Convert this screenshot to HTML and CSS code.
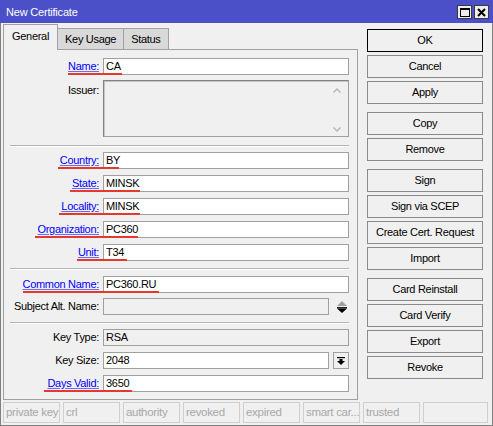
FILE: index.html
```html
<!DOCTYPE html>
<html lang="en">
<head>
    <meta charset="UTF-8">
    <meta name="viewport" content="width=device-width, initial-scale=1.0">
    <title>New Certificate</title>
    <link rel="stylesheet" href="styles.css">
</head>
<body>
    <div class="window">
        <div class="title-bar">
            <span class="title">New Certificate</span>
            <div class="win-buttons">
                <span class="win-btn">
                    <svg width="10" height="9" viewBox="0 0 10 9"><rect x="0.5" y="0.5" width="9" height="8" fill="none" stroke="#000"/><rect x="0" y="0" width="10" height="2" fill="#000"/></svg>
                </span>
                <span class="win-btn">
                    <svg width="9" height="9" viewBox="0 0 9 9"><path d="M1 1 L8 8 M8 1 L1 8" stroke="#000" stroke-width="2"/></svg>
                </span>
            </div>
        </div>

        <div class="window-body">
            <div class="main">
                <div class="tab-area">
                    <div class="tabs">
                        <div class="tab active">General</div>
                        <div class="tab">Key Usage</div>
                        <div class="tab">Status</div>
                    </div>

                    <div class="panel">
                        <!-- name / issuer -->
                        <div class="group g-top">
                            <div class="row">
                                <label class="lbl link">Name:</label>
                                <div class="field">CA</div>
                                <span class="mark m-name"></span>
                            </div>
                            <div class="row">
                                <label class="lbl lbl-top">Issuer:</label>
                                <div class="field disabled textarea">
                                    <div class="scroll">
                                        <svg width="8" height="5" viewBox="0 0 8 5"><path d="M0.5 4.5 L4 1 L7.5 4.5" fill="none" stroke="#b4b4b4" stroke-width="1.4"/></svg>
                                        <svg width="8" height="5" viewBox="0 0 8 5"><path d="M0.5 0.5 L4 4 L7.5 0.5" fill="none" stroke="#b4b4b4" stroke-width="1.4"/></svg>
                                    </div>
                                </div>
                            </div>
                        </div>

                        <div class="sep s1"></div>

                        <!-- subject -->
                        <div class="group">
                            <div class="row">
                                <label class="lbl link">Country:</label>
                                <div class="field">BY</div>
                                <span class="mark m-country"></span>
                            </div>
                            <div class="row">
                                <label class="lbl link">State:</label>
                                <div class="field">MINSK</div>
                                <span class="mark m-state"></span>
                            </div>
                            <div class="row">
                                <label class="lbl link">Locality:</label>
                                <div class="field">MINSK</div>
                                <span class="mark m-locality"></span>
                            </div>
                            <div class="row">
                                <label class="lbl link">Organization:</label>
                                <div class="field">PC360</div>
                                <span class="mark m-org"></span>
                            </div>
                            <div class="row">
                                <label class="lbl link">Unit:</label>
                                <div class="field">T34</div>
                                <span class="mark m-unit"></span>
                            </div>
                        </div>

                        <div class="sep s2"></div>

                        <div class="group g-tight">
                            <div class="row">
                                <label class="lbl link">Common Name:</label>
                                <div class="field">PC360.RU</div>
                                <span class="mark m-common"></span>
                            </div>
                            <div class="row with-btn">
                                <label class="lbl">Subject Alt. Name:</label>
                                <div class="field disabled"></div>
                                <div class="spin">
                                    <svg width="10" height="12" viewBox="0 0 10 12"><polygon points="5,0 10,5 0,5" fill="#9aa39a"/><rect x="0" y="6" width="10" height="1.5" fill="#222"/><polygon points="0,7.5 10,7.5 5,12" fill="#000"/></svg>
                                </div>
                            </div>
                        </div>

                        <div class="sep s3"></div>

                        <!-- key -->
                        <div class="group">
                            <div class="row">
                                <label class="lbl">Key Type:</label>
                                <div class="field disabled">RSA</div>
                            </div>
                            <div class="row with-btn">
                                <label class="lbl">Key Size:</label>
                                <div class="field">2048</div>
                                <div class="drop">
                                    <svg width="8" height="8" viewBox="0 0 8 8"><rect x="0" y="0" width="8" height="1.2" fill="#000"/><rect x="2.5" y="2" width="3" height="2.5" fill="#000"/><polygon points="0,4 8,4 4,8" fill="#000"/></svg>
                                </div>
                            </div>
                            <div class="row">
                                <label class="lbl link">Days Valid:</label>
                                <div class="field">3650</div>
                                <span class="mark m-days"></span>
                            </div>
                        </div>
                    </div>
                </div>

                <div class="actions">
                    <div class="btn-group">
                        <button class="btn default">OK</button>
                        <button class="btn">Cancel</button>
                        <button class="btn">Apply</button>
                    </div>
                    <div class="btn-group">
                        <button class="btn">Copy</button>
                        <button class="btn">Remove</button>
                    </div>
                    <div class="btn-group">
                        <button class="btn">Sign</button>
                        <button class="btn">Sign via SCEP</button>
                        <button class="btn">Create Cert. Request</button>
                        <button class="btn">Import</button>
                    </div>
                    <div class="btn-group">
                        <button class="btn">Card Reinstall</button>
                        <button class="btn">Card Verify</button>
                        <button class="btn">Export</button>
                        <button class="btn">Revoke</button>
                    </div>
                </div>
            </div>

            <div class="status-bar">
                <span class="cell">private key</span>
                <span class="cell">crl</span>
                <span class="cell">authority</span>
                <span class="cell">revoked</span>
                <span class="cell">expired</span>
                <span class="cell">smart car...</span>
                <span class="cell">trusted</span>
                <span class="cell last"></span>
            </div>
        </div>
    </div>
</body>
</html>
```

FILE: styles.css
```css
:root {
    --bg-color: #f0f0f0;
    --title-color: #4b50c8;
    --border-color: #a0a0a0;
    --link-color: #0000ff;
    --mark-color: #e5392f;
    --muted-color: #a8a8a8;
}

* {
    margin: 0;
    padding: 0;
    box-sizing: border-box;
}

body {
    font-family: "Liberation Sans", Arial, sans-serif;
    font-size: 11px;
    letter-spacing: -0.3px;
    color: #000;
    background: var(--bg-color);
}

.window {
    width: 493px;
    height: 426px;
    display: flex;
    flex-direction: column;
    background: var(--bg-color);
}

/* title bar */
.title-bar {
    height: 23px;
    flex-shrink: 0;
    background: var(--title-color);
    color: white;
    display: flex;
    justify-content: space-between;
    align-items: center;
    padding: 0 4px 0 6px;
}

.title {
    font-size: 11px;
    letter-spacing: -0.2px;
}

.win-buttons {
    display: flex;
    gap: 2px;
    padding-top: 1px;
}

.win-btn {
    width: 15px;
    height: 14px;
    background: #ededed;
    border: 1px solid #3a3a3a;
    display: flex;
    align-items: center;
    justify-content: center;
}

.window-body {
    flex: 1;
    border: 1px solid #808080;
    border-top: none;
    display: flex;
    flex-direction: column;
}

.main {
    display: flex;
    padding-left: 2px;
}

/* tabs */
.tab-area {
    width: 355px;
}

.tabs {
    height: 26px;
    display: flex;
    align-items: flex-end;
}

.tab {
    height: 21px;
    padding: 2px 7px 0;
    line-height: 17px;
    border: 1px solid var(--border-color);
    border-bottom: none;
    background: #d9d9d9;
    margin-left: -1px;
}

.tab.active {
    position: relative;
    z-index: 1;
    height: 26px;
    margin-left: 0;
    margin-bottom: -1px;
    padding: 3px 8px 0;
    background: var(--bg-color);
}

.panel {
    height: 351px;
    border: 1px solid var(--border-color);
    padding: 8px 8px 0 0;
}

.group {
    display: flex;
    flex-direction: column;
    gap: 6px;
}

.g-top,
.g-tight {
    gap: 5px;
}

.row {
    position: relative;
    display: grid;
    grid-template-columns: 95px 1fr;
    column-gap: 4px;
}

.row.with-btn {
    grid-template-columns: 95px 1fr 16px;
    column-gap: 4px 2px;
}

.lbl {
    text-align: right;
    line-height: 17px;
    white-space: nowrap;
}

.lbl-top {
    padding-top: 2px;
}

.link {
    color: var(--link-color);
    text-decoration: underline;
    text-decoration-color: #6b6bff;
}

.field {
    height: 17px;
    border: 1px solid var(--border-color);
    background: white;
    padding: 0 2px;
    line-height: 15px;
    white-space: nowrap;
}

.field.disabled {
    background: var(--bg-color);
}

.field.textarea {
    height: 57px;
    border-top-color: #828282;
    border-left-color: #828282;
    box-shadow: inset 1px 1px 0 #c4c4c4;
    display: flex;
    justify-content: flex-end;
}

.scroll {
    width: 14px;
    display: flex;
    flex-direction: column;
    justify-content: space-between;
    align-items: center;
    padding: 7px 0 4px;
    margin-right: 2px;
}

.spin {
    display: flex;
    justify-content: center;
    align-items: center;
    padding-left: 2px;
}

.drop {
    height: 17px;
    border: 1px solid var(--border-color);
    background: var(--bg-color);
    display: flex;
    justify-content: center;
    align-items: center;
}

/* separators */
.sep {
    margin-left: 6px;
    border-top: 1px solid #b4b4b4;
    border-bottom: 1px solid white;
}

.s1 { margin-top: 8px; margin-bottom: 5px; }
.s2 { margin-top: 7px; margin-bottom: 6px; }
.s3 { margin-top: 7px; margin-bottom: 5px; }

/* red annotation marks */
.mark {
    position: absolute;
    bottom: 0;
    height: 2px;
    background: var(--mark-color);
}

.m-name { left: 64px; width: 54px; }
.m-country { left: 54px; width: 61px; }
.m-state { left: 66px; width: 70px; }
.m-locality { left: 55px; width: 81px; }
.m-org { left: 31px; width: 103px; }
.m-unit { left: 73px; width: 50px; }
.m-common { left: 19px; width: 136px; }
.m-days { left: 40px; width: 88px; }

/* buttons column */
.actions {
    width: 116px;
    margin-left: 9px;
    padding-top: 6px;
    display: flex;
    flex-direction: column;
    gap: 8px;
}

.btn-group {
    display: flex;
    flex-direction: column;
    gap: 3px;
}

.btn {
    height: 23px;
    font: inherit;
    letter-spacing: inherit;
    color: #000;
    background: var(--bg-color);
    border: 1px solid #8a8a8a;
    line-height: 21px;
    text-align: center;
    white-space: nowrap;
    cursor: pointer;
}

.btn.default {
    border-color: #000;
}

/* status bar */
.status-bar {
    display: flex;
    gap: 3px;
    margin: 2px 4px 0 2px;
}

.cell {
    width: 57px;
    height: 21px;
    border: 1px solid #cfcfcf;
    padding-left: 2px;
    line-height: 19px;
    color: var(--muted-color);
    white-space: nowrap;
    overflow: hidden;
    font-size: 11.5px;
}

.cell.last {
    flex: 1;
}
```
